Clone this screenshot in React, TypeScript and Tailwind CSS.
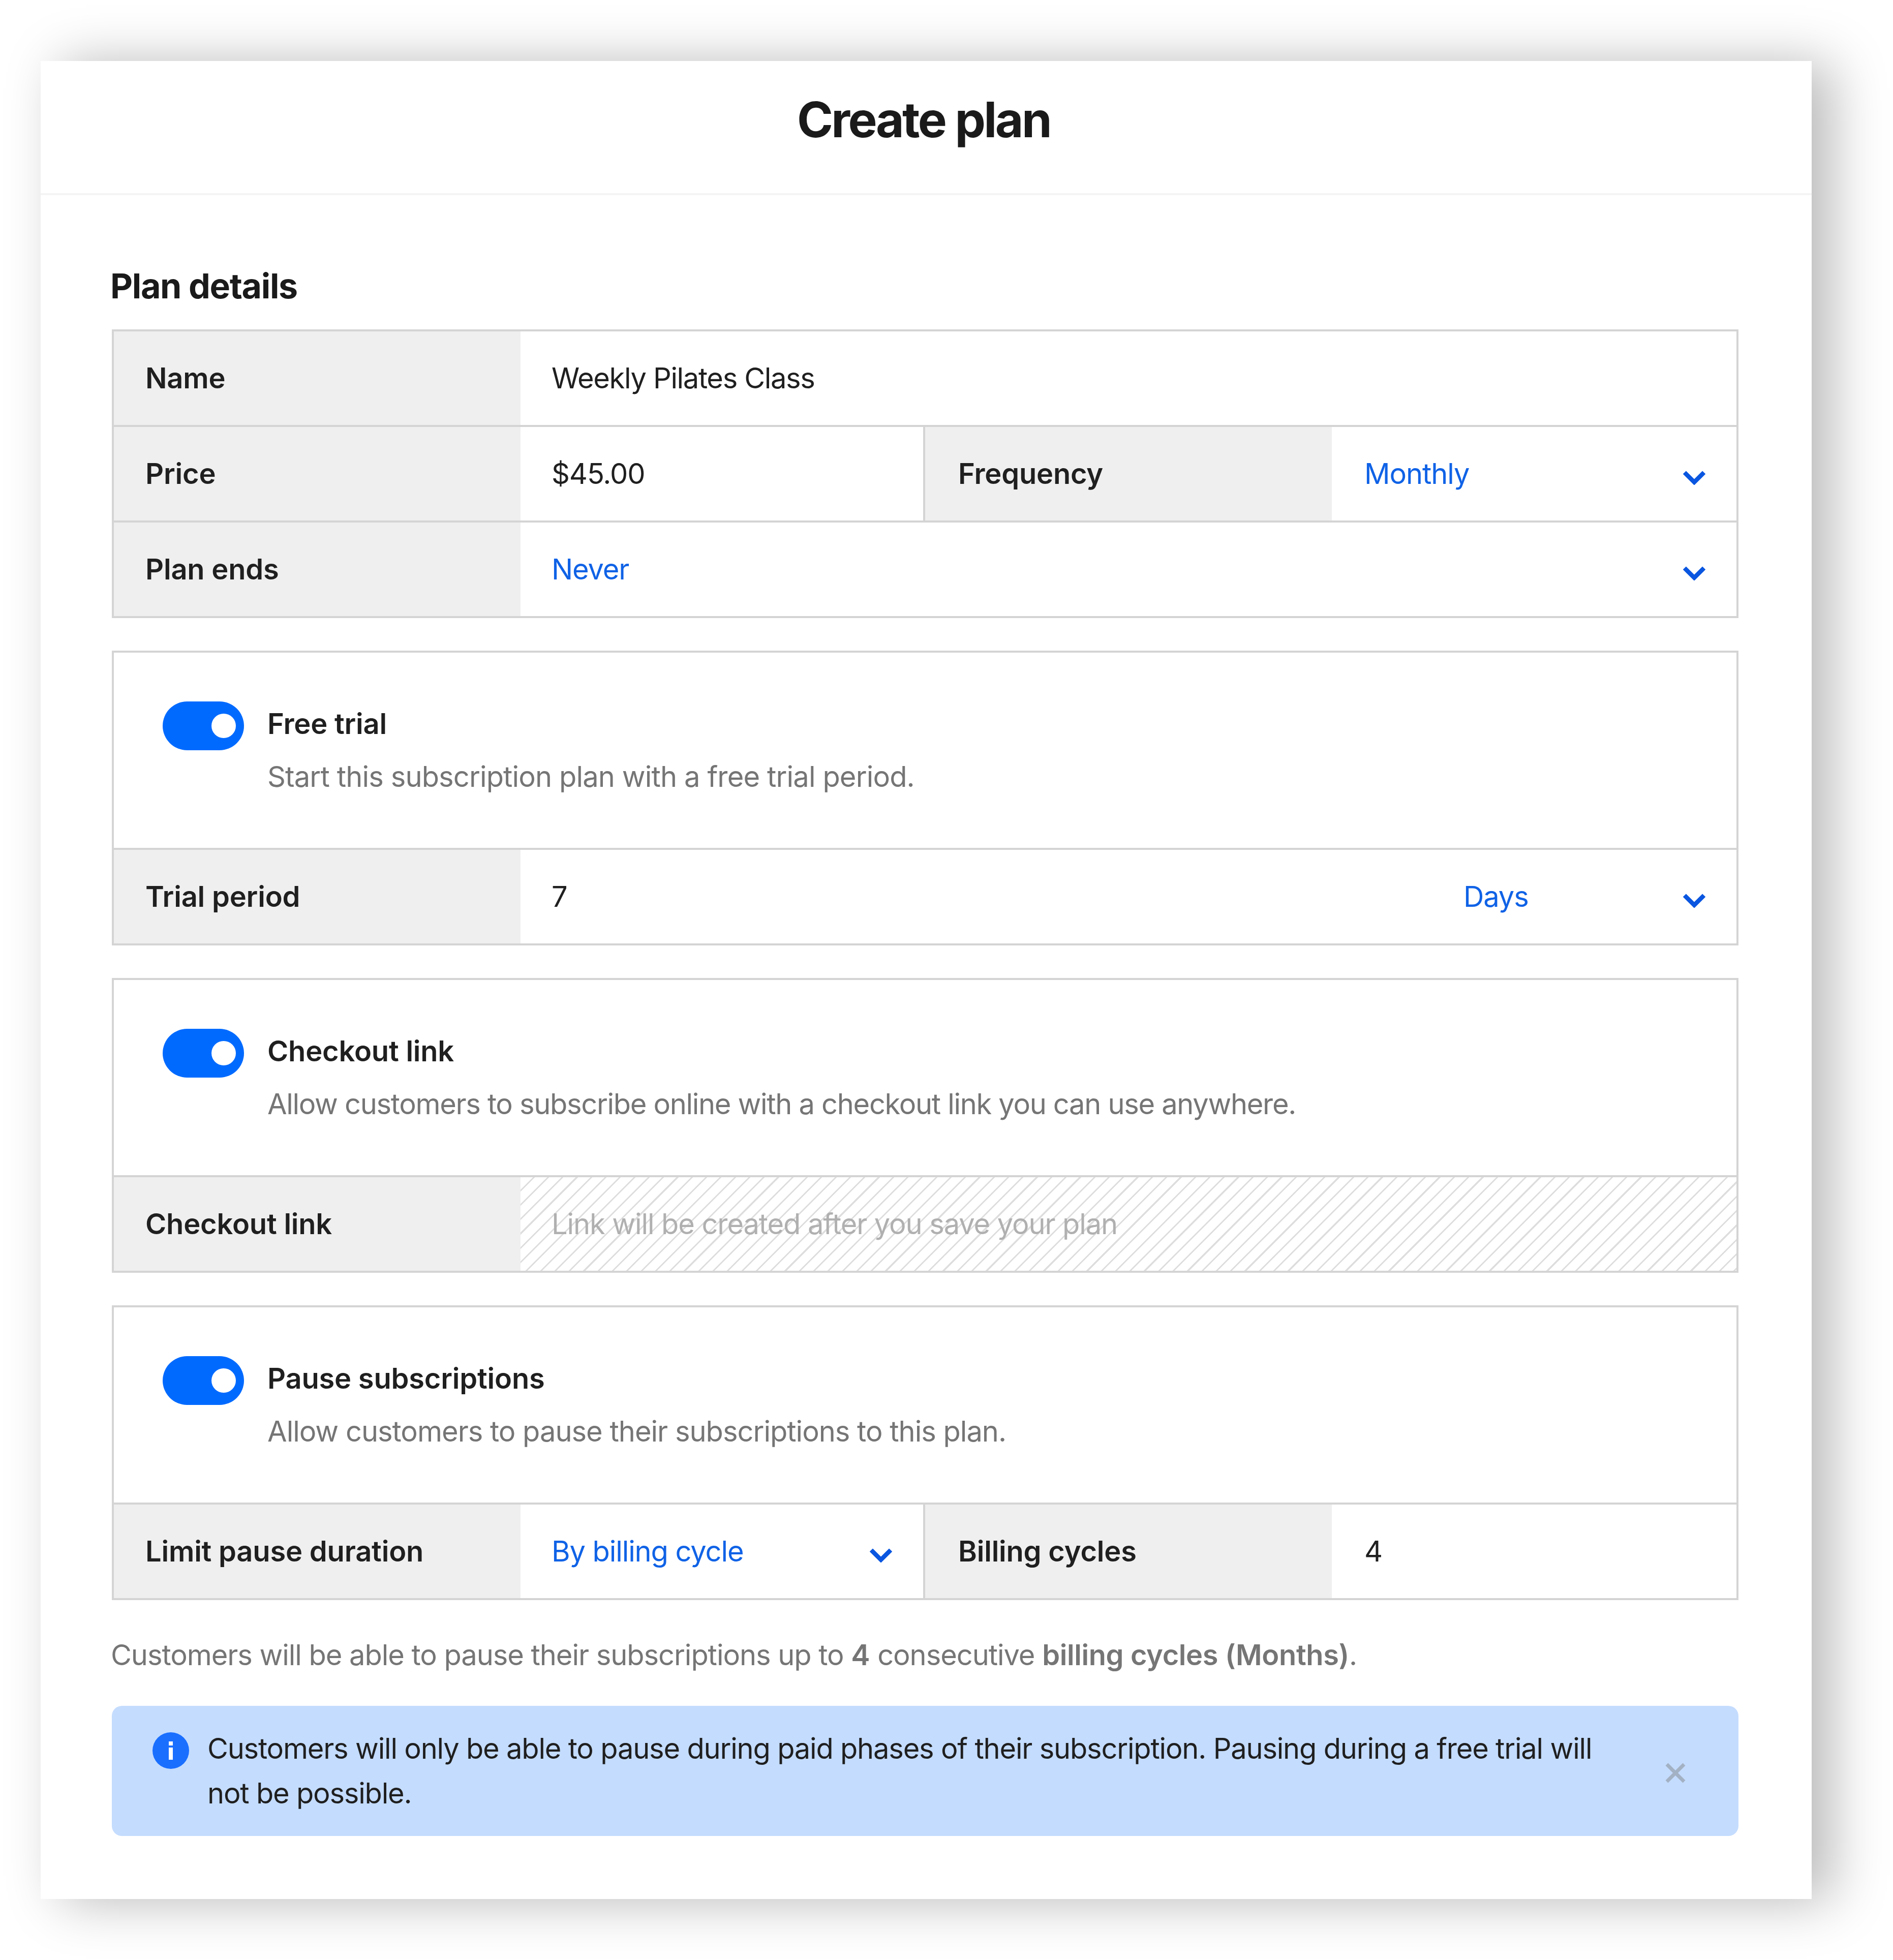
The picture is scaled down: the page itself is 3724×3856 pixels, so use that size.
import type { ReactNode } from "react";

const font = "font-['Inter',sans-serif]";

function Chevron() {
  return (
    <svg viewBox="0 0 46 30" className="w-[44px] h-[30px] shrink-0 mt-[14px]" fill="none">
      <path d="M3 5 L23 25 L43 5" stroke="#0a56e0" strokeWidth="9" />
    </svg>
  );
}

function Label({ children, className = "pl-[62px]" }: { children: ReactNode; className?: string }) {
  return (
    <div
      className={`flex items-center w-[800px] shrink-0 bg-[#efefef] text-[56px] font-semibold tracking-[-0.2px] text-[#1f1f1f] ${className}`}
    >
      {children}
    </div>
  );
}

function Value({ children, className = "flex-1 px-[61px]" }: { children: ReactNode; className?: string }) {
  return <div className={`flex items-center text-[56px] tracking-[-1.1px] text-[#1f1f1f] ${className}`}>{children}</div>;
}

function Select({ text, className = "" }: { text: string; className?: string }) {
  return (
    <div className={`flex items-center justify-between text-[56px] tracking-[-1.1px] text-[#0f62e6] ${className}`}>
      <span>{text}</span>
      <Chevron />
    </div>
  );
}

function Row({ children, top = false }: { children: ReactNode; top?: boolean }) {
  return <div className={`flex h-[188px] ${top ? "border-t-4 border-[#d4d4d4]" : ""}`}>{children}</div>;
}

function Toggle() {
  return (
    <span className="flex items-center justify-end w-[160px] h-[96px] shrink-0 rounded-full bg-[#006aff] pr-[16px]">
      <span className="w-[48px] h-[48px] rounded-full bg-white" />
    </span>
  );
}

function ToggleHead({ title, text, tracking }: { title: string; text: string; tracking: string }) {
  return (
    <div className="flex h-[384px] pl-[96px] pt-[96px] gap-[46px]">
      <Toggle />
      <div>
        <div className="text-[56px] leading-[88px] font-semibold tracking-[-0.2px] text-[#1f1f1f]">{title}</div>
        <div className={`mt-[16px] text-[56px] leading-[88px] text-[#757575] ${tracking}`}>{text}</div>
      </div>
    </div>
  );
}

function Table({ children, className = "" }: { children: ReactNode; className?: string }) {
  return <div className={`border-4 border-[#d4d4d4] ${className}`}>{children}</div>;
}

export default function App() {
  return (
    <div className={`min-h-[3856px] bg-white pl-[80px] pt-[120px] ${font}`}>
      <div className="w-[3484px] h-[3616px] bg-white shadow-[40px_4px_100px_rgba(0,0,0,0.28)]">
        <header className="flex items-center justify-center h-[264px] border-b-4 border-[#f4f4f4] pb-[30px] pr-[10px]">
          <h1 className="text-[96px] font-bold tracking-[-3.6px] text-[#1a1a1a]">Create plan</h1>
        </header>

        <div className="pl-[140px] pr-[144px]">
          <h2 className="pt-[128px] h-[264px] -ml-[3px] text-[68px] leading-[100px] font-bold tracking-[-1.3px] text-[#1a1a1a]">
            Plan details
          </h2>

          <Table>
            <div className="flex h-[184px]">
              <Label>Name</Label>
              <Value className="flex-1 px-[61px] tracking-[-1.35px]">Weekly Pilates Class</Value>
            </div>
            <Row top>
              <Label>Price</Label>
              <Value className="w-[792px] px-[61px]">$45.00</Value>
              <div className="w-[4px] bg-[#d4d4d4]" />
              <Label className="pl-[65px]">Frequency</Label>
              <Value className="flex-1 pl-[64px] pr-[61px]">
                <Select text="Monthly" className="w-full" />
              </Value>
            </Row>
            <Row top>
              <Label>Plan ends</Label>
              <Value>
                <Select text="Never" className="w-full" />
              </Value>
            </Row>
          </Table>

          <Table className="mt-[64px]">
            <ToggleHead
              title="Free trial"
              text="Start this subscription plan with a free trial period."
              tracking="tracking-[-0.87px]"
            />
            <Row top>
              <Label>Trial period</Label>
              <Value>
                <span className="flex-1">7</span>
                <Select text="Days" className="w-[476px]" />
              </Value>
            </Row>
          </Table>

          <Table className="mt-[64px]">
            <ToggleHead
              title="Checkout link"
              text="Allow customers to subscribe online with a checkout link you can use anywhere."
              tracking="tracking-[-1.32px]"
            />
            <Row top>
              <Label>Checkout link</Label>
              <div className="flex flex-1 items-center px-[61px] text-[56px] tracking-[-1.1px] text-[#b0b0b0] bg-[repeating-linear-gradient(135deg,#ffffff_0px,#ffffff_17px,#dedede_17px,#dedede_20px)]">
                Link will be created after you save your plan
              </div>
            </Row>
          </Table>

          <Table className="mt-[64px]">
            <ToggleHead
              title="Pause subscriptions"
              text="Allow customers to pause their subscriptions to this plan."
              tracking="tracking-[-1px]"
            />
            <Row top>
              <Label>Limit pause duration</Label>
              <Value className="w-[792px] px-[61px]">
                <Select text="By billing cycle" className="w-full" />
              </Value>
              <div className="w-[4px] bg-[#d4d4d4]" />
              <Label className="pl-[65px]">Billing cycles</Label>
              <Value className="flex-1 pl-[64px] pr-[61px]">4</Value>
            </Row>
          </Table>

          <p className="mt-[64px] -ml-[2px] text-[56px] leading-[88px] tracking-[-1.05px] text-[#757575]">
            Customers will be able to pause their subscriptions up to{" "}
            <b className="font-semibold tracking-normal">4</b> consecutive{" "}
            <b className="font-semibold tracking-[-0.4px]">billing cycles (Months)</b>.
          </p>

          <div className="flex mt-[56px] h-[256px] rounded-[20px] bg-[#c4dcfe] pl-[80px] pr-[104px] pt-[52px]">
            <svg viewBox="0 0 72 72" className="w-[72px] h-[72px] shrink-0 mr-[36px]">
              <circle cx="36" cy="36" r="36" fill="#1a6fff" />
              <rect x="32" y="18" width="8" height="8" fill="#fff" />
              <rect x="32" y="30" width="8" height="24" fill="#fff" />
            </svg>
            <p className="flex-1 -mt-[12px] text-[56px] leading-[88px] tracking-[-1.2px] text-[#1f1f1f]">
              Customers will only be able to pause during paid phases of their subscription. Pausing during a free trial
              will not be possible.
            </p>
            <svg viewBox="0 0 40 40" className="w-[40px] h-[40px] shrink-0 mt-[60px] ml-[100px]">
              <path d="M3 3 L37 37 M37 3 L3 37" stroke="#a3b1c4" strokeWidth="7" />
            </svg>
          </div>
        </div>
      </div>
    </div>
  );
}
